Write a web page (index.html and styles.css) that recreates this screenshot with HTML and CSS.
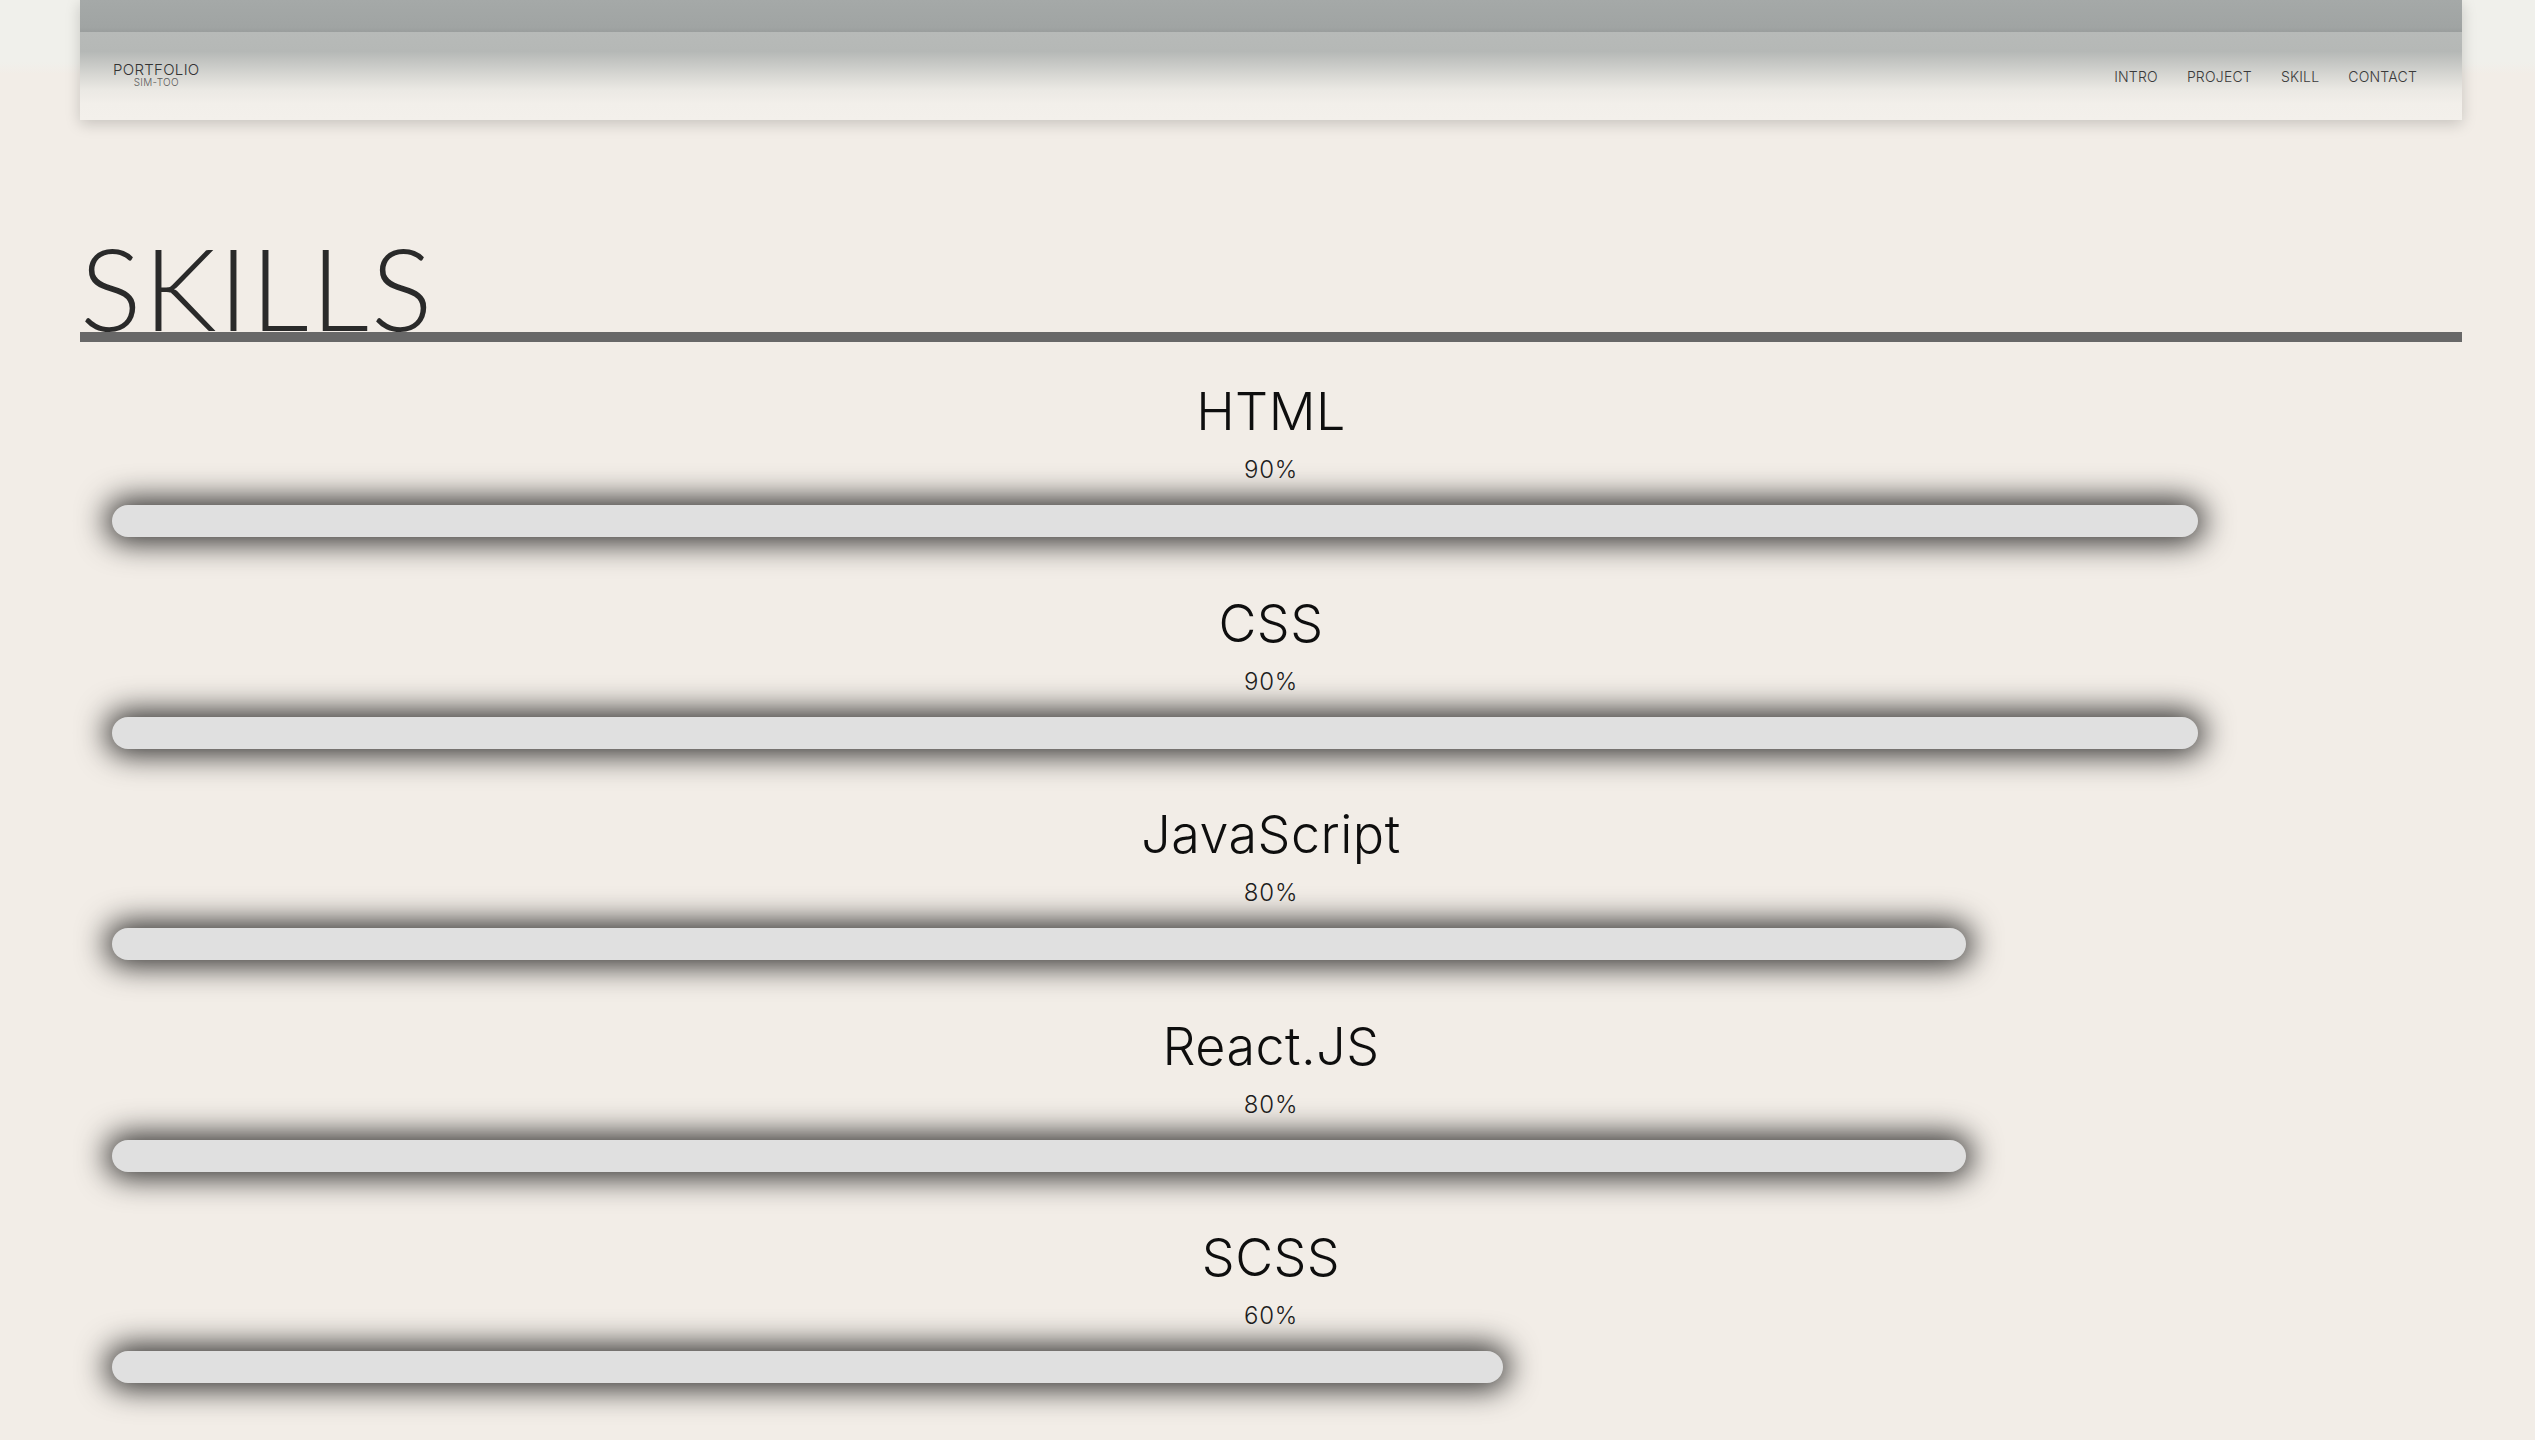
FILE: index.html
```html
<!DOCTYPE html>
<html lang="en">
<head>
<meta charset="utf-8">
<title>Portfolio - Skills</title>
<link rel="stylesheet" href="styles.css">
</head>
<body>
<div class="page">
  <header class="site-header">
    <div class="header-top"></div>
    <div class="header-main">
      <a class="logo" href="#">
        <span class="logo-title">PORTFOLIO</span>
        <span class="logo-sub">SIM-TOO</span>
      </a>
      <nav class="nav">
        <a href="#">INTRO</a>
        <a href="#">PROJECT</a>
        <a href="#">SKILL</a>
        <a href="#">CONTACT</a>
      </nav>
    </div>
  </header>

  <section class="skills">
    <h1 class="skills-title">SKILLS</h1>
    <ul class="skill-list">
      <li class="skill">
        <h2 class="skill-name">HTML</h2>
        <p class="skill-pct">90%</p>
        <div class="skill-track"><div class="skill-bar" style="width:90%"></div></div>
      </li>
      <li class="skill">
        <h2 class="skill-name">CSS</h2>
        <p class="skill-pct">90%</p>
        <div class="skill-track"><div class="skill-bar" style="width:90%"></div></div>
      </li>
      <li class="skill">
        <h2 class="skill-name">JavaScript</h2>
        <p class="skill-pct">80%</p>
        <div class="skill-track"><div class="skill-bar" style="width:80%"></div></div>
      </li>
      <li class="skill">
        <h2 class="skill-name">React.JS</h2>
        <p class="skill-pct">80%</p>
        <div class="skill-track"><div class="skill-bar" style="width:80%"></div></div>
      </li>
      <li class="skill">
        <h2 class="skill-name">SCSS</h2>
        <p class="skill-pct">60%</p>
        <div class="skill-track"><div class="skill-bar" style="width:60%"></div></div>
      </li>
    </ul>
  </section>
</div>
</body>
</html>
```

FILE: styles.css
```css
html, body {
  margin: 0;
  padding: 0;
}

body {
  min-height: 1440px;
  background: linear-gradient(#f0f0eb 0, #f0f0eb 62px, #f2ede7 74px, #f2ede7 100%);
  font-family: "Inter", "DejaVu Sans", sans-serif;
  color: #111;
  overflow: hidden;
}

.page {
  width: 2382px;
  margin-left: 80px;
}

/* Header */
.site-header {
  box-shadow: 0 4px 14px rgba(0, 0, 0, 0.18);
}

.header-top {
  height: 32px;
  background: linear-gradient(#a5a9a8, #a0a4a3 85%, #9a9e9d);
}

.header-main {
  height: 88px;
  display: flex;
  align-items: center;
  justify-content: space-between;
  padding: 0 45px 0 33px;
  background: linear-gradient(#b7bab8 0, #b5b8b6 22%, #d6d6d2 48%, #ebe9e4 66%, #f2efea 82%, #f3f0eb 100%);
}

.logo {
  display: flex;
  flex-direction: column;
  align-items: center;
  text-decoration: none;
  margin-top: -2px;
}

.logo-title {
  font-size: 15px;
  line-height: 15px;
  font-weight: 300;
  color: #333;
  letter-spacing: 0.3px;
}

.logo-sub {
  font-size: 10px;
  line-height: 11px;
  font-weight: 300;
  color: #5a5a5a;
  letter-spacing: 0.3px;
}

.nav {
  display: flex;
  gap: 29px;
  margin-top: 1px;
}

.nav a {
  font-size: 14px;
  line-height: 16px;
  font-weight: 300;
  color: #3a3a3a;
  text-decoration: none;
  letter-spacing: 0.2px;
}

/* Skills */
.skills {
  padding-top: 121px;
}

.skills-title {
  margin: 0;
  font-family: "Lato", "Liberation Sans", sans-serif;
  font-weight: 300;
  font-size: 115px;
  line-height: 91px;
  color: #2a2a2a;
  letter-spacing: 2px;
  border-bottom: 10px solid #686868;
}

.skill-list {
  list-style: none;
  margin: 38px 0 0;
  padding: 0 32px;
}

.skill {
  display: flex;
  flex-direction: column;
  align-items: center;
  margin-bottom: 54.5px;
}

.skill-name {
  margin: 0;
  font-size: 52px;
  line-height: 64px;
  font-weight: 300;
  color: #0e0e0e;
  letter-spacing: 0.5px;
}

.skill-pct {
  margin: 11px 0 0;
  font-size: 24px;
  line-height: 30px;
  font-weight: 300;
  color: #1e1e1e;
  letter-spacing: 0.8px;
}

.skill-track {
  align-self: stretch;
  margin-top: 20px;
}

.skill-bar {
  height: 32px;
  border-radius: 16px;
  background: #e0e0e0;
  box-shadow: 0 0 30px 6px rgba(0, 0, 0, 0.8);
}
```
